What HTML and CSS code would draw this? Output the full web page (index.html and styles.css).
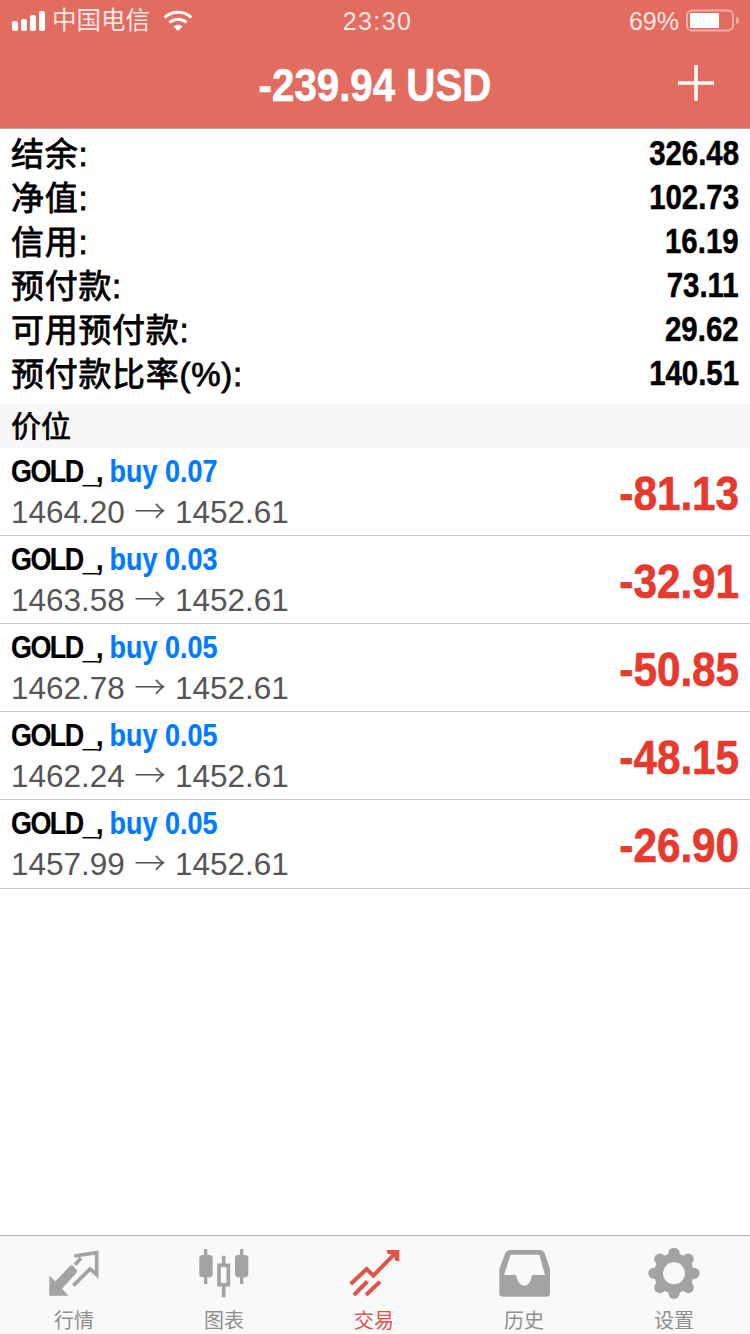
FILE: index.html
```html
<!DOCTYPE html>
<html lang="zh">
<head>
<meta charset="utf-8">
<title>交易</title>
<link rel="stylesheet" href="styles.css">
</head>
<body>
<div class="app">
  <header class="header">
    <div class="status">
      <div class="status-left">
        <svg class="signal" width="34" height="20" viewBox="0 0 34 20"><rect x="0" y="10" width="6" height="10" rx="2"/><rect x="9" y="8" width="6" height="12" rx="2"/><rect x="18" y="4" width="6" height="16" rx="2"/><rect x="27" y="0" width="6" height="20" rx="2"/></svg>
        <span class="carrier">中国电信</span>
        <svg class="wifi" width="30" height="22" viewBox="0 0 30 22"><path d="M1.500 7.500C9 .5 21 .5 28.500 7.500"/><path d="M6.500 12.500C11.500 8 18.500 8 23.500 12.500"/><path class="wifi-dot" d="M10.500 16.500C13 14.300 17 14.300 19.500 16.500L15 21Z"/></svg>
      </div>
      <div class="clock">23:30</div>
      <div class="status-right">
        <span class="pct">69%</span>
        <svg class="battery" width="54" height="24" viewBox="0 0 54 24"><rect class="b-shell" x="1" y="1.500" width="46" height="20" rx="5"/><rect class="b-fill" x="4" y="4" width="29" height="15" rx="1"/><path class="b-tip" d="M50 8c2 0 3 1.500 3 3.500s-1 3.500-3 3.500z"/></svg>
      </div>
    </div>
    <div class="nav">
      <div class="nav-title">-239.94 USD</div>
      <svg class="plus" width="36" height="36" viewBox="0 0 36 36"><path d="M18 0V36M0 18H36"/></svg>
    </div>
  </header>

  <section class="summary">
    <div class="sum-row"><span class="sum-label">结余:</span><span class="sum-value">326.48</span></div>
    <div class="sum-row"><span class="sum-label">净值:</span><span class="sum-value">102.73</span></div>
    <div class="sum-row"><span class="sum-label">信用:</span><span class="sum-value">16.19</span></div>
    <div class="sum-row"><span class="sum-label">预付款:</span><span class="sum-value">73.11</span></div>
    <div class="sum-row"><span class="sum-label">可用预付款:</span><span class="sum-value">29.62</span></div>
    <div class="sum-row"><span class="sum-label">预付款比率(%):</span><span class="sum-value">140.51</span></div>
  </section>

  <div class="band">价位</div>

  <section class="positions">
    <div class="pos">
      <div class="pos-main"><div class="pos-title"><span class="sym">GOLD_,</span> <span class="side">buy 0.07</span></div><div class="pos-price">1464.20 <span class="arrow">→</span> 1452.61</div></div>
      <div class="pnl">-81.13</div>
    </div>
    <div class="pos">
      <div class="pos-main"><div class="pos-title"><span class="sym">GOLD_,</span> <span class="side">buy 0.03</span></div><div class="pos-price">1463.58 <span class="arrow">→</span> 1452.61</div></div>
      <div class="pnl">-32.91</div>
    </div>
    <div class="pos">
      <div class="pos-main"><div class="pos-title"><span class="sym">GOLD_,</span> <span class="side">buy 0.05</span></div><div class="pos-price">1462.78 <span class="arrow">→</span> 1452.61</div></div>
      <div class="pnl">-50.85</div>
    </div>
    <div class="pos">
      <div class="pos-main"><div class="pos-title"><span class="sym">GOLD_,</span> <span class="side">buy 0.05</span></div><div class="pos-price">1462.24 <span class="arrow">→</span> 1452.61</div></div>
      <div class="pnl">-48.15</div>
    </div>
    <div class="pos">
      <div class="pos-main"><div class="pos-title"><span class="sym">GOLD_,</span> <span class="side">buy 0.05</span></div><div class="pos-price">1457.99 <span class="arrow">→</span> 1452.61</div></div>
      <div class="pnl">-26.90</div>
    </div>
  </section>

  <div class="spacer"></div>

  <nav class="tabbar">
    <div class="tab">
      <svg width="70" height="60" viewBox="0 0 210 180"><path class="fill" d="M28 95L46 112L90 66Q95 62 100 66L110 78Q113 84 108 88L66 134L85 155H28Z"/><path class="line" d="M103 36L170 26V92L150 75L100 125M123 42L105 62"/></svg>
      <span class="tab-label">行情</span>
    </div>
    <div class="tab">
      <svg width="70" height="60" viewBox="0 0 210 180"><path class="fill" d="M42 15H52V33H62L68 39V94L62 100H52V120H42V100H34L28 94V39L34 33H42Z"/><path class="line" d="M101 35V60M101 125V160"/><rect class="line" x="87" y="64" width="28" height="58"/><path class="fill" d="M150 15H160V33H169L175 39V94L169 100H160V120H150V100H141L135 94V39L141 33H150Z"/></svg>
      <span class="tab-label">图表</span>
    </div>
    <div class="tab tab-active">
      <svg width="70" height="60" viewBox="0 0 210 180"><path class="a-line" d="M32 120L80 75L100 95L165 28"/><path class="a-fill" d="M140 18H178V52L165 50L163 32L143 30Z"/><path class="a-line" d="M42 153L82 112M78 153L120 113"/></svg>
      <span class="tab-label">交易</span>
    </div>
    <div class="tab">
      <svg width="70" height="60" viewBox="0 0 210 180"><path class="fill" fill-rule="evenodd" d="M60 18H150Q160 18 165 30L180 75V148Q180 158 170 158H38Q28 158 28 148V75L45 30Q50 18 60 18ZM62 32L42 93H74Q80 93 80 100Q85 125 104 125Q120 125 124 100Q125 93 130 93H165L148 32Z"/></svg>
      <span class="tab-label">历史</span>
    </div>
    <div class="tab">
      <svg width="70" height="60" viewBox="0 0 210 180"><g class="fill"><circle cx="102" cy="88" r="60"/><circle cx="102" cy="28" r="17"/><circle cx="144.400" cy="45.600" r="17"/><circle cx="162" cy="88" r="17"/><circle cx="144.400" cy="130.400" r="17"/><circle cx="102" cy="148" r="17"/><circle cx="59.600" cy="130.400" r="17"/><circle cx="42" cy="88" r="17"/><circle cx="59.600" cy="45.600" r="17"/></g><circle class="hole" cx="102" cy="88" r="33"/></svg>
      <span class="tab-label">设置</span>
    </div>
  </nav>
</div>
</body>
</html>
```
FILE: styles.css
```css
* { box-sizing: border-box; }
html, body { margin: 0; padding: 0; background: #fff; }
body { font-family: "Liberation Sans", "Noto Sans CJK SC", sans-serif; }
.app { width: 750px; height: 1334px; display: flex; flex-direction: column; overflow: hidden; }

.header { height: 129px; background: #e26c60; color: #fff; border-bottom: 1px solid #c9a09b; flex: none; }
.status { height: 41px; display: grid; grid-template-columns: 1fr auto 1fr; align-items: center; padding: 0 10px 0 12px; }
.status-left { display: flex; align-items: center; gap: 8px; }
.signal { fill: #fff; }
.carrier { font-size: 24.500px; line-height: 40px; color: #fbe6e3; margin-left: -2px; }
.wifi { margin-left: 5px; fill: none; stroke: #fff; stroke-width: 3; }
.wifi-dot { fill: #fff; stroke: none; }
.clock { font-size: 25px; line-height: 40px; letter-spacing: 1.400px; color: #fbe6e3; margin-left: 3px; }
.status-right { display: flex; justify-content: flex-end; align-items: center; gap: 7px; }
.pct { font-size: 25px; line-height: 40px; color: #fbe6e3; }
.b-shell { fill: none; stroke: #f2aea7; stroke-width: 2; }
.b-fill { fill: #fff; }
.b-tip { fill: #f2aea7; }

.nav { height: 87px; display: flex; align-items: center; justify-content: center; position: relative; }
.nav-title { font-size: 46px; font-weight: 700; line-height: 87px; padding-top: 1px; transform: scaleX(.875); -webkit-text-stroke: .6px #fff; margin-right: 1px; }
.plus { position: absolute; right: 36px; top: 24px; fill: none; stroke: #fff; stroke-width: 3.500; }

.summary { padding-top: 3px; flex: none; }
.sum-row { height: 44px; display: flex; justify-content: space-between; align-items: center; padding: 0 11px; color: #000; }
.sum-label { font-size: 33px; font-weight: 400; letter-spacing: .7px; padding-bottom: 4px; -webkit-text-stroke: .8px #000; }
.sum-value { font-size: 35px; font-weight: 700; padding-bottom: 2px; transform: scaleX(.84); transform-origin: right center; -webkit-text-stroke: .5px #000; }

.band { margin-top: 8px; height: 44px; line-height: 46px; background: #f7f7f7; padding-left: 11px; font-size: 30px; font-weight: 400; -webkit-text-stroke: .7px #000; color: #000; flex: none; }

.positions { flex: none; }
.pos { height: 88px; display: flex; justify-content: space-between; align-items: center; padding: 0 11px; border-bottom: 1px solid #c8c8c8; }
.pos:last-child { height: 89px; padding-bottom: 1px; }
.pos-main { display: flex; flex-direction: column; }
.pos-title { font-size: 31px; font-weight: 700; line-height: 44px; height: 44px; color: #000; padding-top: 3px; transform: scaleX(.87); transform-origin: left center; white-space: nowrap; -webkit-text-stroke: .2px; }
.sym { letter-spacing: -1.800px; }
.side { color: #007aff; }
.pos-price { font-size: 31.500px; line-height: 40px; margin: -2px 0 4px; color: #555; white-space: nowrap; }
.arrow { font-family: "Noto Sans CJK SC", sans-serif; font-weight: 300; margin: 0 .5px; }
.pnl { font-size: 48px; font-weight: 700; color: #e63a2e; transform: scaleX(.88); transform-origin: right center; padding-top: 3px; -webkit-text-stroke: .7px #e63a2e; }

.spacer { flex: 1; }

.tabbar { height: 99px; flex: none; background: #f9f9f9; border-top: 1px solid #b5b5b5; display: grid; grid-template-columns: repeat(5, 150px); }
.tab { display: flex; flex-direction: column; align-items: center; padding-top: 8px; color: #8f8f8f; }
.tab svg { flex: none; }
.tab-label { font-size: 20px; line-height: 24px; margin: 5px 2px 0 0; }
.tab-active { color: #e0524a; }
.fill { fill: #a3a3a3; }
.line { fill: none; stroke: #a3a3a3; stroke-width: 11; }
.hole { fill: #f9f9f9; }
.a-line { fill: none; stroke: #e0524a; stroke-width: 12; }
.a-fill { fill: #e0524a; }
```
